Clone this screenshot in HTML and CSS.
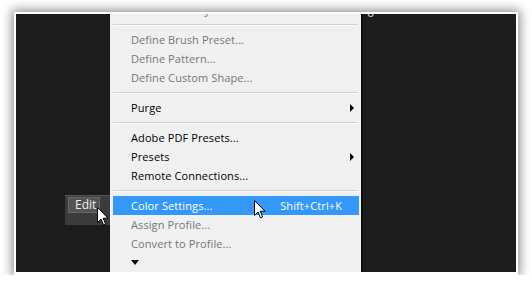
FILE: index.html
```html
<!DOCTYPE html>
<html>
<head>
<meta charset="utf-8">
<link rel="stylesheet" href="styles.css">
</head>
<body>
<div class="page">
  <div class="shot">
    <div class="left">
      <div class="edit-wrap"><div class="edit">Edit</div></div>
    </div>
    <div class="menu">
      <ul class="items">
        <li class="item dis">Auto-Blend Layers...</li>
        <li class="sep"></li>
        <li class="item dis">Define Brush Preset...</li>
        <li class="item dis">Define Pattern...</li>
        <li class="item dis">Define Custom Shape...</li>
        <li class="sep"></li>
        <li class="item"><span>Purge</span><i class="sub"></i></li>
        <li class="sep"></li>
        <li class="item">Adobe PDF Presets...</li>
        <li class="item"><span>Presets</span><i class="sub"></i></li>
        <li class="item">Remote Connections...</li>
        <li class="sep"></li>
        <li class="item hl"><span>Color Settings...</span><span class="key">Shift+Ctrl+K</span></li>
        <li class="item dis">Assign Profile...</li>
        <li class="item dis">Convert to Profile...</li>
        <li class="item"><i class="more"></i></li>
      </ul>
    </div>
    <div class="right"><span class="frag">U</span></div>
    <svg class="cursor c1" width="12" height="19" viewBox="0 0 12 19"><path d="M0.5 0.5 L0.5 15.5 L4 12 L6.5 17.8 L8.6 16.9 L6.2 11.2 L11 11.2 Z" fill="#fff" stroke="#000" stroke-width="1" stroke-linejoin="round"/></svg>
    <svg class="cursor c2" width="12" height="19" viewBox="0 0 12 19"><path d="M0.5 0.5 L0.5 15.5 L4 12 L6.5 17.8 L8.6 16.9 L6.2 11.2 L11 11.2 Z" fill="#fff" stroke="#000" stroke-width="1" stroke-linejoin="round"/></svg>
  </div>
</div>
</body>
</html>
```

FILE: styles.css
```css
html, body {
  margin: 0;
  padding: 0;
  background: #ffffff;
}

.page {
  padding: 12px 0 0 14px;
}

.shot {
  position: relative;
  width: 500px;
  height: 258px;
  border: 2px solid #ffffff;
  border-bottom-width: 3px;
  background: #1c1c1c;
  box-shadow: 0 0 10px 2px rgba(0, 0, 0, 0.45);
  display: flex;
  overflow: hidden;
  font-family: "Open Sans", "Noto Sans", sans-serif;
  font-size: 11px;
}

.left {
  width: 94px;
  flex: none;
  background: #1c1c1c;
}

.edit-wrap {
  margin: 181px 0 0 49px;
  width: 45px;
  height: 30px;
  background: #3b3b3b;
  border-top: 1px solid #555;
  box-sizing: border-box;
  padding: 1px 0 0 3px;
}

.edit {
  width: 32px;
  height: 16px;
  box-sizing: border-box;
  background: #545454;
  border: 1px solid #686868;
  color: #f0f0f0;
  font-size: 12px;
  line-height: 14px;
  padding-left: 6px;
}

.menu {
  width: 251px;
  flex: none;
  background: #f0f0f0;
  border-right: 2px solid #0c0c0c;
}

.items {
  list-style: none;
  margin: -14px 0 0;
  padding: 0;
}

.item {
  height: 19px;
  margin: 0 2px 0 3px;
  padding: 0 5px 0 18px;
  display: flex;
  align-items: center;
  color: #000000;
  line-height: 19px;
  white-space: nowrap;
  letter-spacing: 0.1px;
}

.item.dis {
  color: #767676;
}

.item.hl {
  background: #3398f8;
  color: #ffffff;
  padding-right: 17px;
}

.key {
  margin-left: auto;
}

.sub {
  margin-left: auto;
  width: 0;
  height: 0;
  border-left: 4px solid #000;
  border-top: 4px solid transparent;
  border-bottom: 4px solid transparent;
}

.more {
  width: 0;
  height: 0;
  border-top: 5px solid #000;
  border-left: 4px solid transparent;
  border-right: 4px solid transparent;
  margin-top: -1px;
}

.sep {
  height: 11px;
  margin: 0 3px;
  position: relative;
}

.sep::after {
  content: "";
  position: absolute;
  left: 0;
  right: 0;
  top: 5px;
  border-top: 1px solid #d2d2d2;
  border-bottom: 1px solid #fbfbfb;
}

.right {
  flex: 1;
  background: #1c1c1c;
  padding-left: 4px;
}

.frag {
  display: block;
  margin-top: -6px;
  color: #d8d8d8;
  font-family: "DejaVu Sans", sans-serif;
  font-size: 10px;
  line-height: 12px;
}

.cursor {
  position: absolute;
}

.c1 {
  left: 81px;
  top: 193px;
}

.c2 {
  left: 238px;
  top: 186px;
}
```
